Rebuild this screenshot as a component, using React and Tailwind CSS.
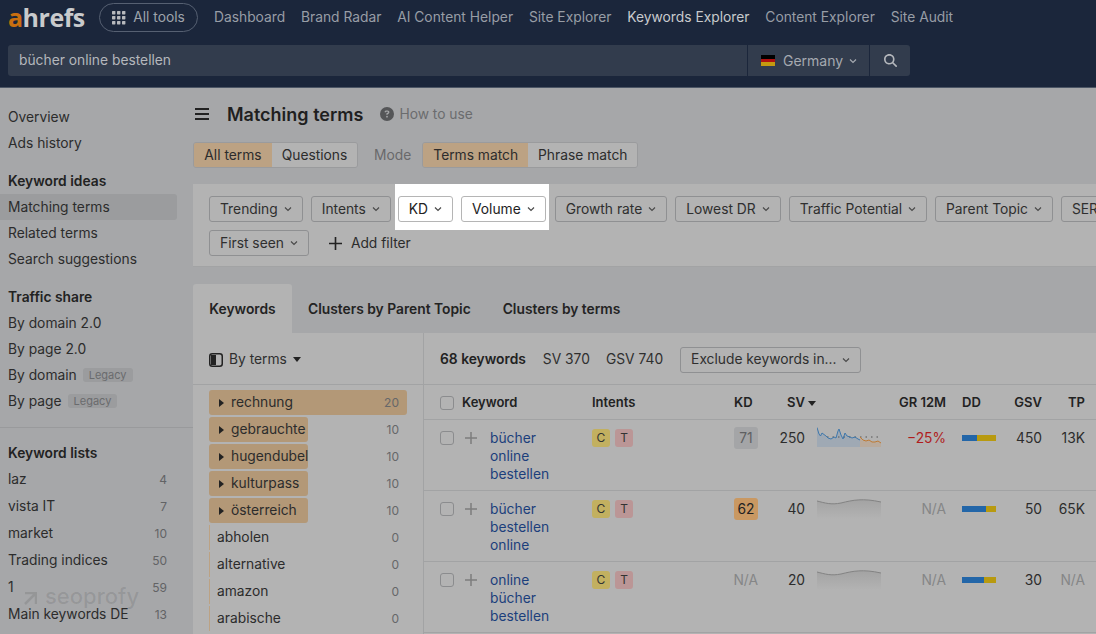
import React from "react";
import { FaCircleQuestion, FaMagnifyingGlass } from "react-icons/fa6";

const navItems = ["Dashboard", "Brand Radar", "AI Content Helper", "Site Explorer", "Keywords Explorer", "Content Explorer", "Site Audit"];

const Chevron = ({ className = "text-[#4a4a4a]" }) => (
  <svg width="8" height="6" viewBox="0 0 8 6" fill="none" className={className}>
    <path d="M1 1.5L4 4.5L7 1.5" stroke="currentColor" strokeWidth="1.2" />
  </svg>
);

const Plus = ({ size = 12, className = "text-[#7d7d7d]" }) => (
  <svg width={size} height={size} viewBox="0 0 12 12" className={className}>
    <path d="M6 0V12M0 6H12" stroke="currentColor" strokeWidth="1.5" />
  </svg>
);

const FilterButton = ({ label, white }) => (
  <button
    className={`h-[26px] px-[10px] flex items-center gap-[6px] shrink-0 rounded-[3px] border text-[13.8px] ${
      white ? "bg-white border-[#b5b5b5] text-[#222]" : "border-[#8f9092] text-[#2f2f2f]"
    }`}
  >
    {label}
    <Chevron />
  </button>
);

function SideItem({ label, badge, count, active }) {
  return (
    <div className={`h-[26px] pl-2 flex items-center text-[13.8px] text-[#2c2c2c] rounded-r-[3px] ${active ? "bg-[#9b9c9e]" : ""}`}>
      {label}
      {badge && <span className="ml-[6px] px-[6px] h-[14px] flex items-center rounded-[3px] bg-[#9b9c9e] text-[11px] text-[#6a6b6d]">{badge}</span>}
      {count && <span className="ml-auto mr-[10px] text-[12px] text-[#626365]">{count}</span>}
    </div>
  );
}

const SideHeading = ({ label }) => <div className="h-[26px] pl-2 flex items-center text-[13.8px] font-semibold text-[#222]">{label}</div>;

function Sidebar() {
  return (
    <aside className="w-[193px] shrink-0 pt-4 pr-4 flex flex-col overflow-hidden">
      <SideItem label="Overview" />
      <SideItem label="Ads history" />
      <div className="mt-[12px]">
        <SideHeading label="Keyword ideas" />
        <SideItem label="Matching terms" active />
        <SideItem label="Related terms" />
        <SideItem label="Search suggestions" />
      </div>
      <div className="mt-[12px]">
        <SideHeading label="Traffic share" />
        <SideItem label="By domain 2.0" />
        <SideItem label="By page 2.0" />
        <SideItem label="By domain" badge="Legacy" />
        <SideItem label="By page" badge="Legacy" />
      </div>
      <div className="mt-[13px] -mr-4 border-t border-[#999a9c] pt-[12px] pr-4">
        <SideHeading label="Keyword lists" />
        {[["laz", "4"], ["vista IT", "7"], ["market", "10"], ["Trading indices", "50"], ["1", "59"], ["Main keywords DE", "13"]].map(([label, count]) => (
          <div key={label} className="h-[27px] flex flex-col justify-center">
            <SideItem label={label} count={count} />
          </div>
        ))}
      </div>
    </aside>
  );
}

const terms = [
  ["rechnung", "20", "w-full"],
  ["gebrauchte", "10", "w-1/2"],
  ["hugendubel", "10", "w-1/2"],
  ["kulturpass", "10", "w-1/2"],
  ["österreich", "10", "w-1/2"],
  ["abholen", "0"],
  ["alternative", "0"],
  ["amazon", "0"],
  ["arabische", "0"],
];

function TermRow({ name, count, bar }) {
  return (
    <div className="relative h-[27px] w-[198px] flex items-center text-[13.8px] text-[#2c2c2c]">
      {bar ? (
        <div className={`absolute left-0 top-px h-[25px] rounded-[3px] bg-[#b39877] ${bar}`} />
      ) : (
        <div className="absolute left-0 top-px h-[25px] w-px bg-[#bca283]" />
      )}
      {bar && (
        <svg width="5" height="8" viewBox="0 0 5 8" className="relative ml-[10px] mr-[7px] text-[#222]">
          <path d="M0 0L5 4L0 8Z" fill="currentColor" />
        </svg>
      )}
      <span className={`relative ${bar ? "" : "ml-2"}`}>{name}</span>
      <span className="relative ml-auto mr-2 text-[12px] text-[#666769]">{count}</span>
    </div>
  );
}

const columns = "grid grid-cols-[22px_130px_142px_24px_47px_76px_65px_50px_46px_43px]";

const Caret = () => (
  <svg width="8" height="5" viewBox="0 0 8 5" className="inline-block ml-[3px] text-[#222]">
    <path d="M0 0H8L4 5Z" fill="currentColor" />
  </svg>
);

function TrendSpark() {
  return (
    <svg width="64" height="21" viewBox="0 0 64 21" className="-mt-[2px]">
      <path d="M0 .5L2 7L3.5 9L5 6L7 7.5L9 9L11 11L14 12L17 10L19 11L21 4L22 2L24 8L26 12L28 6L30 9L33 10L35 11L38 10L41 12L43 13V20H0Z" fill="#9fa9b4" />
      <path d="M43 10L46 13L49 14L52 13L55 15L58 15L61 14L64 16V20H43Z" fill="#b9aa9c" />
      <path d="M10 10H64" stroke="#555" strokeDasharray="1.5 4" />
      <path d="M0 .5L2 7L3.5 9L5 6L7 7.5L9 9L11 11L14 12L17 10L19 11L21 4L22 2L24 8L26 12L28 6L30 9L33 10L35 11L38 10L41 12L43 13" fill="none" stroke="#3f78ac" strokeWidth="1" />
      <path d="M43 10L46 13L49 14L52 13L55 15L58 15L61 14L64 16" fill="none" stroke="#bf7a33" strokeWidth="1" />
    </svg>
  );
}

function FlatSpark({ id }) {
  return (
    <svg width="64" height="21" viewBox="0 0 64 21" className="-mt-[2px]">
      <defs>
        <linearGradient id={id} x1="0" y1="0" x2="0" y2="1">
          <stop offset="0" stopColor="#a3a3a3" />
          <stop offset="1" stopColor="#b3b3b3" />
        </linearGradient>
      </defs>
      <path d="M0 3C8 5 14 7 24 5C36 2 46 0 64 4V21H0Z" fill={`url(#${id})`} />
      <path d="M0 3C8 5 14 7 24 5C36 2 46 0 64 4" fill="none" stroke="#838383" strokeWidth="1" />
    </svg>
  );
}

const NA = () => <span className="text-[#858687]">N/A</span>;

const rows = [
  {
    words: ["bücher", "online", "bestellen"],
    kd: <span className="w-[24px] h-[22px] -mt-[2px] flex items-center justify-center rounded-[3px] bg-[#a4a5a7] text-[#5f6062]">71</span>,
    sv: "250",
    spark: <TrendSpark />,
    gr: <span className="text-[#b01c1c]">−25%</span>,
    dd: "w-[15px]",
    gsv: "450",
    tp: "13K",
  },
  {
    words: ["bücher", "bestellen", "online"],
    kd: <span className="w-[24px] h-[22px] -mt-[2px] flex items-center justify-center rounded-[3px] bg-[#c99862] text-[#222]">62</span>,
    sv: "40",
    spark: <FlatSpark id="flat-a" />,
    gr: <NA />,
    dd: "w-[24px]",
    gsv: "50",
    tp: "65K",
  },
  {
    words: ["online", "bücher", "bestellen"],
    kd: <NA />,
    sv: "20",
    spark: <FlatSpark id="flat-b" />,
    gr: <NA />,
    dd: "w-[22px]",
    gsv: "30",
    tp: <NA />,
  },
];

const Checkbox = () => <div className="w-[14px] h-[14px] rounded-[3px] border border-[#8b8c8e]" />;

function TableRow({ row }) {
  return (
    <div className={`${columns} h-[71px] pl-4 pt-[9px] border-b border-[#a2a3a4] text-[13.8px] leading-[18px] text-[#2c2c2c]`}>
      <div className="pt-[2px]"><Checkbox /></div>
      <div className="flex gap-[13px]">
        <div className="pt-[3px] pl-[3px]"><Plus /></div>
        <div className="flex flex-col text-[#1c3f7c]">
          {row.words.map((word) => <span key={word}>{word}</span>)}
        </div>
      </div>
      <div className="flex gap-[5px] text-[12px]">
        <span className="w-[18px] h-[18px] flex items-center justify-center rounded-[3px] bg-[#c2b060] text-[#333]">C</span>
        <span className="w-[18px] h-[18px] flex items-center justify-center rounded-[3px] bg-[#bb9696] text-[#333]">T</span>
      </div>
      <div className="flex justify-end">{row.kd}</div>
      <div className="text-right">{row.sv}</div>
      <div className="ml-3">{row.spark}</div>
      <div className="text-right">{row.gr}</div>
      <div className="ml-4 pt-[6px]">
        <div className="w-[34px] h-[6px] flex bg-[#b89a10]">
          <div className={`h-full bg-[#2366a8] ${row.dd}`} />
        </div>
      </div>
      <div className="text-right">{row.gsv}</div>
      <div className="text-right">{row.tp}</div>
    </div>
  );
}

function Header() {
  return (
    <header className="h-[88px] shrink-0 bg-[#1b263b] border-b border-[#4c5666] px-2 pt-[3px] text-[13.8px]">
      <div className="flex items-center h-[29px]">
        <div className="w-[91px] text-[25px] leading-[29px] font-bold tracking-[-0.5px] text-[#c9cacc] font-['Open_Sans',sans-serif]">
          <span className="text-[#c96f10]">a</span>hrefs
        </div>
        <button className="w-[99px] h-[29px] rounded-full border border-[#566072] flex items-center justify-center gap-[7px] text-[#9ea3ab]">
          <svg width="14" height="14" viewBox="0 0 14 14" fill="#b7b9bd">
            {[0, 5, 10].flatMap((y) => [0, 5, 10].map((x) => <rect key={`${x}-${y}`} x={x} y={y} width="3.4" height="3.4" rx="0.6" />))}
          </svg>
          All tools
        </button>
        <nav className="ml-4 flex gap-[15.8px]">
          {navItems.map((item) => (
            <span key={item} className={item === "Keywords Explorer" ? "text-[#c8cacd]" : "text-[#989da6]"}>{item}</span>
          ))}
        </nav>
      </div>
      <div className="mt-[13px] w-[902px] h-[31px] flex rounded-[3px] bg-[#323c4d] text-[#b4b7bc]">
        <div className="flex-1 flex items-center pl-[11px]">bücher online bestellen</div>
        <div className="w-[122px] flex items-center border-l border-[#1b263b] pl-[13px] text-[#a5a9b0] text-[14px]">
          <div className="w-[14px] h-[11px] flex flex-col mr-[8px]">
            <div className="flex-1 bg-black" />
            <div className="flex-1 bg-[#b01010]" />
            <div className="flex-1 bg-[#c49a10]" />
          </div>
          Germany
          <Chevron className="ml-[6px] text-[#a5a9b0]" />
        </div>
        <div className="w-[41px] flex items-center justify-center border-l border-[#1b263b]">
          <FaMagnifyingGlass size={13} className="text-[#b4b7bc]" />
        </div>
      </div>
    </header>
  );
}

export default function App() {
  return (
    <div className="relative w-[1096px] h-[634px] overflow-hidden flex flex-col bg-[#a6a7a9] font-['Inter',sans-serif]">
      <Header />
      <div className="flex flex-1 min-h-0">
        <Sidebar />
        <main className="flex-1 min-w-0 flex flex-col">
          {/* Title */}
          <div className="h-[54px] pb-[2px] flex items-center shrink-0">
            <svg width="14" height="12" viewBox="0 0 14 12" className="ml-[2px] text-[#222]">
              <path d="M0 1H14M0 6H14M0 11H14" stroke="currentColor" strokeWidth="1.8" />
            </svg>
            <h1 className="ml-[18px] text-[18px] font-semibold text-[#1f1f1f]">Matching terms</h1>
            <FaCircleQuestion size={14} className="ml-[17px] text-[#555658]" />
            <span className="ml-[5px] text-[13.8px] text-[#6b6c6e]">How to use</span>
          </div>
          {/* Segments */}
          <div className="h-[26px] flex items-center text-[13.8px] text-[#2c2c2c] shrink-0">
            <div className="flex h-[26px] rounded-[3px] border border-[#9a9b9d] overflow-hidden">
              <span className="w-[78px] flex items-center justify-center bg-[#bca283]">All terms</span>
              <span className="w-[85px] flex items-center justify-center bg-[#b3b3b3]">Questions</span>
            </div>
            <span className="ml-4 text-[#69696b]">Mode</span>
            <div className="ml-[11px] flex h-[26px] rounded-[3px] border border-[#9a9b9d] overflow-hidden">
              <span className="w-[105px] flex items-center justify-center bg-[#bca283]">Terms match</span>
              <span className="w-[109px] flex items-center justify-center bg-[#b3b3b3]">Phrase match</span>
            </div>
          </div>
          {/* Filters */}
          <div className="mt-[16px] h-[83px] shrink-0 bg-[#b3b3b3] border-b border-[#a2a3a4] pl-4 pt-[12px] overflow-hidden">
            <div className="flex gap-2">
              <FilterButton label="Trending" />
              <FilterButton label="Intents" />
              <div className="flex gap-2 bg-white -ml-[4px] -mr-[2px] px-[3px] -mt-[12px] pt-[12px] pb-2 -mb-2">
                <FilterButton label="KD" white />
                <FilterButton label="Volume" white />
              </div>
              <FilterButton label="Growth rate" />
              <FilterButton label="Lowest DR" />
              <FilterButton label="Traffic Potential" />
              <FilterButton label="Parent Topic" />
              <FilterButton label="SERP features" />
            </div>
            <div className="mt-2 flex items-center text-[13.8px] text-[#2c2c2c]">
              <FilterButton label="First seen" />
              <span className="ml-5 mr-[9px]"><Plus size={13} className="text-[#222]" /></span>
              Add filter
            </div>
          </div>
          {/* Tabs */}
          <div className="pt-[17px] flex items-end text-[13.8px] font-semibold text-[#232323] shrink-0">
            <span className="w-[99px] h-[49px] pt-[2px] flex items-center justify-center rounded-t-[3px] bg-[#b3b3b3]">Keywords</span>
            <span className="ml-4 h-[49px] pt-[2px] flex items-center">Clusters by Parent Topic</span>
            <span className="ml-8 h-[49px] pt-[2px] flex items-center">Clusters by terms</span>
          </div>
          {/* Panel */}
          <div className="flex-1 min-h-0 bg-[#b3b3b3] flex">
            <div className="w-[231px] shrink-0 border-r border-[#a2a3a4]">
              <div className="h-[52px] pl-4 pt-[2px] flex items-center border-b border-[#a2a3a4] text-[13.8px] text-[#2f2f2f]">
                <svg width="14" height="14" viewBox="0 0 14 14" className="mr-[6px] text-[#222]">
                  <rect x="0.75" y="0.75" width="12.5" height="12.5" rx="2.5" fill="none" stroke="currentColor" strokeWidth="1.5" />
                  <path d="M2 2H7V12H2Z" fill="currentColor" />
                </svg>
                By terms
                <svg width="8" height="5" viewBox="0 0 8 5" className="ml-[6px] text-[#222]">
                  <path d="M0 0H8L4 5Z" fill="currentColor" />
                </svg>
              </div>
              <div className="pl-4 pt-[4px]">
                {terms.map(([name, count, bar]) => (
                  <TermRow key={name} name={name} count={count} bar={bar} />
                ))}
              </div>
            </div>
            <div className="flex-1 min-w-0">
              <div className="h-[52px] pl-4 pt-[2px] flex items-center border-b border-[#a2a3a4] text-[13.8px] text-[#2f2f2f]">
                <span className="font-semibold text-[#222]">68 keywords</span>
                <span className="ml-[17px]">SV 370</span>
                <span className="ml-4">GSV 740</span>
                <span className="ml-[17px]"><FilterButton label="Exclude keywords in..." /></span>
              </div>
              <div className={`${columns} h-[35px] pl-4 pt-[2px] items-center border-b border-[#a2a3a4] text-[13px] font-semibold text-[#222]`}>
                <Checkbox />
                <span>Keyword</span>
                <span>Intents</span>
                <span>KD</span>
                <span className="col-span-2 ml-[29px]">SV<Caret /></span>
                <span className="-ml-[20px] text-right">GR 12M</span>
                <span className="ml-4">DD</span>
                <span className="text-right">GSV</span>
                <span className="text-right">TP</span>
              </div>
              {rows.map((row) => <TableRow key={row.words.join(" ")} row={row} />)}
            </div>
          </div>
        </main>
      </div>
      {/* Watermark */}
      <div className="absolute left-[24px] top-[580px] flex items-center gap-[8px] text-[22px] font-medium text-black/10 pointer-events-none">
        <svg width="13" height="13" viewBox="0 0 13 13" className="mt-[3px]">
          <path d="M1 1H12V12M12 1L1 12" fill="none" stroke="currentColor" strokeWidth="2.5" />
        </svg>
        seoprofy
      </div>
    </div>
  );
}
